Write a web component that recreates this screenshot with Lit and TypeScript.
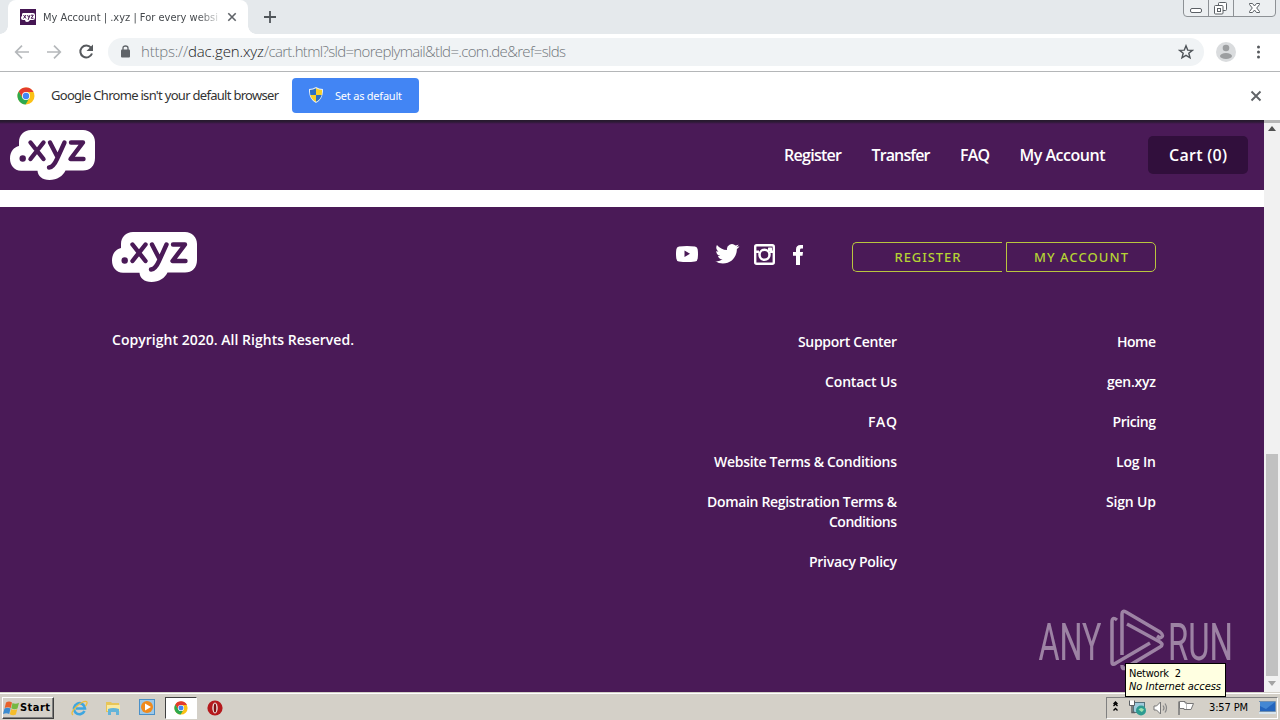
import { LitElement, html, css, svg } from "lit";
import { customElement, property } from "lit/decorators.js";

/** Inline text whose tracking is adjusted so that it spans a given width. */
@customElement("fit-text")
class FitText extends LitElement {
  @property({ type: Number }) width = 0;
  static styles = css`
    :host { display: inline-block; white-space: pre; }
  `;
  render() {
    return html`<slot></slot>`;
  }
  updated() {
    this.style.letterSpacing = "0px";
    const n = (this.textContent || "").length;
    const natural = this.getBoundingClientRect().width;
    const gap = (this.width - natural) / Math.max(1, n - 1);
    this.style.letterSpacing = `${gap}px`;
    this.style.marginRight = `${-gap}px`;
  }
}

const fit = (text: string, width: number) =>
  html`<fit-text .width=${width}>${text}</fit-text>`;

const logo = (cls: string) => html`
  <svg class=${cls} viewBox="0 0 85 50">
    <path fill="#fff" d="M21 0H73C80 0 85 5 85 12V28C85 36 80 40.500 73 40.500H55.500C53 46 47 50 39.500 50C32 50 28 46 27.500 40.800H11C4 40.800 0 35 0 28.500C0 21.500 4 17 9 16V12C9 5 14 0 21 0Z"/>
    <circle cx="12.700" cy="28.500" r="3.200" fill="#4a1a57"/>
    <g fill="none" stroke="#4a1a57" stroke-width="4.400" stroke-linecap="round" stroke-linejoin="round">
      <path d="M20.500 12.500L33.500 29M33.500 12.500L20.500 29"/>
      <path d="M40 12.500L47.500 27M54.500 12.500L47 29Q43.500 37 39 37.500"/>
      <path d="M61 12.500H73L60.500 29H73.500"/>
    </g>
  </svg>`;

const chrome = (cls: string) => html`
  <svg class=${cls} viewBox="0 0 18 18">
    <circle cx="9" cy="9" r="8.500" fill="#fbc116"/>
    <path fill="#e33b2e" d="M9 9V5H16.600A8.500 8.500 0 0 0 1.700 4.600L5.500 11Z"/>
    <path fill="#2da94f" d="M1.700 4.600A8.500 8.500 0 0 0 8.600 17.500L12.400 11H9L5.500 11Z"/>
    <circle cx="9" cy="9" r="4" fill="#fff"/>
    <circle cx="9" cy="9" r="3.200" fill="#4286f5"/>
  </svg>`;

const flag = svg`
  <path fill="#e8622c" d="M3 2.500Q6 .5 9 2.500L7.800 8Q5 6.500 1.700 8Z"/>
  <path fill="#75b843" d="M9.500 3Q12.500 4.500 16 2.700L14.500 8.400Q11.500 10 8.300 8.300Z"/>
  <path fill="#3c8bd0" d="M1.500 8.600Q4.500 7.100 7.600 8.600L6.200 14Q3.500 12.500 0 14Z"/>
  <path fill="#f5bd2b" d="M8.200 9Q11.500 10.700 14.300 9L12.900 14.500Q10 16 6.800 14.300Z"/>`;

@customElement("app-root")
class AppRoot extends LitElement {
  static styles = css`
    * { box-sizing: border-box; }
    :host {
      display: flex; flex-direction: column; position: relative;
      width: 1280px; height: 720px; overflow: hidden;
      font-family: "Noto Sans", "Open Sans", sans-serif;
    }
    svg { display: block; flex: none; }

    .tabs { height: 34px; flex: none; display: flex; background: #e5e9ec; }
    .tabwrap { width: 256px; display: flex; align-items: flex-end; flex: none; }
    .foot { width: 8px; height: 8px; }
    .foot.l { background: radial-gradient(circle at 0 0, #e5e9ec 7.500px, #fff 8px); }
    .foot.r { background: radial-gradient(circle at 100% 0, #e5e9ec 7.500px, #fff 8px); }
    .tab {
      width: 240px; height: 34px; background: #fff; border-radius: 8px 8px 0 0;
      display: flex; align-items: center; padding-left: 12px; color: #45494d; font-size: 11px;
    }
    .title {
      width: 176px; margin-left: 7px; white-space: nowrap; font-family: "DejaVu Sans Condensed", "DejaVu Sans", sans-serif;
      -webkit-mask-image: linear-gradient(to right, #000 155px, transparent 180px);
    }
    .tabx { margin-left: 8px; }
    .plus { margin: 11px 0 0 8px; }
    .grow { flex: 1; }
    .win { width: 94px; height: 17px; margin-right: 3px; }

    .toolbar { height: 37px; flex: none; background: #fff; display: flex; align-items: center; }
    .navi { margin: -1px 11px 0 12px; }
    .omni {
      width: 1096px; height: 28px; border-radius: 14px; background: #f0f3f5; margin-top: -2px;
      display: flex; align-items: center; padding: 0 10px 0 13px; color: #71767b;
      font-family: "Open Sans", sans-serif; font-weight: 300; font-size: 15px;
    }
    .url { margin: -2px 0 0 11px; line-height: 20px; white-space: nowrap; }
    .host { color: #202124; }
    .avatar { margin: -2px 0 0 12px; }
    .dots { margin: -1px 0 0 20px; }

    .info {
      height: 49px; flex: none; background: #fff; border-top: 1px solid #b4b6b8; padding: 0 18px 0 17px;
      display: flex; align-items: center; color: #333; font-size: 13px;
    }
    .msg { margin: -2px 0 0 16px; line-height: 18px; }
    .default {
      width: 127px; height: 35px; margin: -1px 0 0 13px; border-radius: 4px; background: #4285f4; color: #fff;
      display: flex; align-items: center; padding: 0 0 1px 17px; font-size: 11px; gap: 12px;
    }

    .view { height: 572px; flex: none; display: flex; position: relative; }
    .page { width: 1264px; display: flex; flex-direction: column; color: #fff; font-weight: 600; font-family: "Open Sans", sans-serif; }
    .head {
      height: 70px; flex: none; background: linear-gradient(#251a2c 0, #2d1a36 2px, #4a1a57 4px);
      display: flex; align-items: flex-start; padding-left: 10px; font-size: 16px; line-height: 22px;
    }
    .hlogo { width: 85px; height: 50px; margin-top: 10px; }
    .menu { display: flex; gap: 29.500px; margin: 24px 0 0 689px; width: 364px; }
    .cart {
      width: 100px; height: 38px; margin-top: 16px; border-radius: 5px; background: #310f3c;
      display: flex; justify-content: center; align-items: center;
    }
    .white { height: 17px; flex: none; background: #fff; }
    .footer { flex: 1; background: #4a1a57; padding: 25px 107px 0 112px; font-size: 14px; line-height: 20px; }
    .row { display: flex; align-items: flex-start; height: 98px; }
    .flogo { width: 85px; height: 50px; }
    .social { margin: 11px 0 0 478px; }
    .btns { display: flex; gap: 4px; margin: 10px 0 0 47px; color: #b5d334; font-family: "Noto Sans", sans-serif; font-weight: 500; font-size: 13px; }
    .btn { width: 150px; height: 30px; border: 1px solid #b9c63f; display: flex; justify-content: center; align-items: center; }
    .btn.a { border-right: 0; border-radius: 5px 0 0 5px; }
    .btn.b { border-radius: 0 5px 5px 0; }
    .cols { display: flex; }
    .copy { width: 485px; }
    .col { display: flex; flex-direction: column; align-items: flex-end; gap: 20px; padding-top: 2px; }
    .c1 { width: 300px; }
    .c2 { width: 259px; }
    .two { display: flex; flex-direction: column; align-items: flex-end; }

    .scroll { width: 16px; background: #f1f1f1; display: flex; flex-direction: column; align-items: center; border-top: 3px solid #b5b5b5; }
    .up { margin-top: 3px; }
    .thumb { width: 12px; height: 222px; margin-top: 323px; background: #c1c1c1; }
    .down { margin-top: 5px; }

    .mark { position: absolute; left: 1036px; top: 606px; }
    .mark text { font-family: "Roboto", sans-serif; font-weight: 400; }
    .tip {
      position: absolute; left: 1125px; top: 663px; width: 101px; height: 34px; background: #ffffe1;
      border: 1px solid #000; color: #000; padding: 3px 0 0 3px; font-size: 11px; line-height: 13px;
      font-family: "DejaVu Sans Condensed", "DejaVu Sans", sans-serif;
      display: flex; flex-direction: column; align-items: flex-start;
    }
    .it { font-style: italic; }

    .bar {
      height: 28px; flex: none; background: #d4d0c8; border-top: 1px solid #d4d0c8; box-shadow: inset 0 1px #fff;
      display: flex; align-items: center; padding: 2px 2px 0 2px; color: #000; font-size: 11px;
      font-family: "DejaVu Sans Condensed", "DejaVu Sans", sans-serif;
    }
    .start {
      width: 52px; height: 22px; border: 1px solid; border-color: #fff #404040 #404040 #fff;
      box-shadow: inset -1px -1px #808080; display: flex; align-items: center; gap: 1px; padding-left: 0; font-weight: 700;
    }
    .ie { margin-left: 17px; }
    .fold { margin-left: 17px; }
    .wmp { margin-left: 17px; }
    .task {
      width: 32px; height: 22px; margin-left: 10px; background: #fff; border: 1px solid; border-color: #404040 #fff #fff #404040;
      display: flex; align-items: center; justify-content: center;
    }
    .c16 { width: 14px; height: 14px; }
    .c18 { width: 18px; height: 18px; }
    .opera { margin-left: 10px; }
    .tray {
      width: 172px; height: 22px; border: 1px solid; border-color: #808080 #fff #fff #808080;
      display: flex; align-items: center; padding-left: 6px;
    }
    .clock { margin-left: 14px; }
    .desk { margin-left: 11px; }
  `;

  render() {
    return html`
      <div class="tabs">
        <div class="tabwrap">
          <div class="foot l"></div>
          <div class="tab">
            <svg width="16" height="16" viewBox="0 0 16 16">
              <rect width="16" height="16" fill="#451653"/>
              <path fill="#fff" d="M3 4H13Q15 4 15 6V9Q15 11 13 11H10Q9 13 7 13Q5 13 5 11H3Q1 11 1 9Q1 7.500 2 7V5.500Q2 4 3 4Z"/>
              <path fill="none" stroke="#451653" stroke-width="1" d="M3.500 6L6 9.500M6 6L3.500 9.500M7.500 6L8.700 8.500M10 6L8 11M11 6.200H13.300L11.200 9.300H13.500"/>
            </svg>
            <div class="title">${fit("My Account | .xyz | For every websi", 175)}</div>
            <svg class="tabx" width="10" height="10" viewBox="0 0 10 10"><path d="M1.300 1.300L8.700 8.700M8.700 1.300L1.300 8.700" stroke="#5f6368" stroke-width="1.600"/></svg>
          </div>
          <div class="foot r"></div>
        </div>
        <svg class="plus" width="13" height="13" viewBox="0 0 13 13"><path d="M6 0V12M0 6H12" stroke="#50555a" stroke-width="1.800"/></svg>
        <div class="grow"></div>
        <svg class="win" viewBox="0 0 94 17">
          <path d="M.5 0V13Q.5 16.500 4 16.500H89Q92.500 16.500 92.500 13V0M25.500 0V16M50.500 0V16" fill="#eceff1" stroke="#8d9195"/>
          <g fill="#fff" stroke="#5b6065">
            <rect x="7.500" y="8.500" width="11" height="4" rx="1.500"/>
            <rect x="35.500" y="2.500" width="8" height="8" rx="1"/>
            <rect x="31.500" y="5.500" width="8.500" height="8.500" rx="1"/>
            <rect x="34.500" y="8.500" width="3" height="3"/>
            <path d="M66.500 3.500H69.500L71.500 6L73.500 3.500H76.500V4.500L73.700 8L76.500 11.500V12.500H73.500L71.500 10L69.500 12.500H66.500V11.500L69.300 8L66.500 4.500Z"/>
          </g>
        </svg>
      </div>

      <div class="toolbar">
        <svg class="navi" width="85" height="18" viewBox="0 0 85 18">
          <g fill="none" stroke="#b5b8bb" stroke-width="1.700"><path d="M17 9H4M10 2.700L3.700 9L10 15.300M35 9H48M42 2.700L48.300 9L42 15.300"/></g>
          <path d="M79 4.700A6 6 0 1 0 80 10.500" fill="none" stroke="#56595d" stroke-width="2"/>
          <path d="M81 1.500V8H74.500Z" fill="#56595d"/>
        </svg>
        <div class="omni">
          <svg width="9" height="13" viewBox="0 0 9 13"><rect y="4.500" width="9" height="8" rx="1" fill="#5f6368"/><path d="M2 5V3Q2 1 4.500 1Q7 1 7 3V5" fill="none" stroke="#5f6368" stroke-width="1.300"/></svg>
          <div class="url">${fit("https://", 47)}<span class="host">${fit("dac.gen.xyz", 76)}</span>${fit("/cart.html?sld=noreplymail&tld=.com.de&ref=slds", 302)}</div>
          <div class="grow"></div>
          <svg width="16" height="16" viewBox="0 0 16 16"><path d="M8 1.800L9.700 6.100L14.300 6.400L10.800 9.300L12 13.800L8 11.300L4 13.800L5.200 9.300L1.700 6.400L6.300 6.100Z" fill="none" stroke="#4f5459" stroke-width="1.400"/></svg>
        </div>
        <svg class="avatar" width="20" height="20" viewBox="0 0 20 20"><circle cx="10" cy="10" r="10" fill="#dadcde"/><circle cx="10" cy="6" r="3.300" fill="#9c9ea0"/><ellipse cx="10" cy="14" rx="6" ry="3" fill="#9c9ea0"/></svg>
        <svg class="dots" width="5" height="14" viewBox="0 0 5 14"><g fill="#56595d"><circle cx="2.500" cy="2" r="1.500"/><circle cx="2.500" cy="7" r="1.500"/><circle cx="2.500" cy="12" r="1.500"/></g></svg>
      </div>

      <div class="info">
        ${chrome("c18")}
        <div class="msg">${fit("Google Chrome isn't your default browser", 228)}</div>
        <div class="default">
          <svg width="14" height="16" viewBox="0 0 14 16">
            <path fill="#e6edf2" d="M7 0Q10 2 14 2Q14.500 12 7 16Q-.5 12 0 2Q4 2 7 0Z"/>
            <path fill="#2b6fc2" d="M7 1.300V8H1.300Q.9 5 1 3Q4 3 7 1.300ZM7 8H12.700Q11.500 12.500 7 14.800Z"/>
            <path fill="#f7cf27" d="M7 1.300V8H12.700Q13.100 5 13 3Q10 3 7 1.300ZM7 8H1.300Q2.500 12.500 7 14.800Z"/>
          </svg>
          ${fit("Set as default", 67)}
        </div>
        <div class="grow"></div>
        <svg width="12" height="12" viewBox="0 0 12 12"><path d="M1.500 1.500L10.500 10.500M10.500 1.500L1.500 10.500" stroke="#606367" stroke-width="1.900"/></svg>
      </div>

      <div class="view">
        <div class="page">
          <div class="head">
            ${logo("hlogo")}
            <div class="menu">
              ${fit("Register", 58)}${fit("Transfer", 59)}${fit("FAQ", 30)}${fit("My Account", 86)}
            </div>
            <div class="cart">${fit("Cart (0)", 58)}</div>
          </div>
          <div class="white"></div>
          <div class="footer">
            <div class="row">
              ${logo("flogo")}
              <svg class="social" width="130" height="23" viewBox="0 0 130 23">
                <path fill="#fff" fill-rule="evenodd" d="M4 3.500Q12 2.500 20 3.500Q22.500 4 22.700 6.500Q23.300 11 22.700 15.500Q22.500 18 20 18.500Q12 19.500 4 18.500Q1.500 18 1.300 15.500Q.7 11 1.300 6.500Q1.500 4 4 3.500ZM9.500 7.500V14L15 10.800Z"/>
                <path transform="translate(40.300 -1.200)" fill="#fff" d="M23.950 4.570a10 10 0 0 1-2.820.770 4.960 4.960 0 0 0 2.160-2.720c-.950.550-2.010.960-3.130 1.180a4.920 4.920 0 0 0-8.380 4.480C7.690 8.090 4.070 6.130 1.640 3.160a4.820 4.820 0 0 0-.670 2.470c0 1.710.870 3.210 2.190 4.100a4.900 4.900 0 0 1-2.230-.620v.060a4.920 4.920 0 0 0 3.950 4.830 5 5 0 0 1-2.210.080 4.940 4.940 0 0 0 4.600 3.420A9.870 9.870 0 0 1 0 19.540a13.990 13.990 0 0 0 7.560 2.210c9.050 0 14-7.500 14-13.980 0-.210 0-.420-.020-.630a9.940 9.940 0 0 0 2.460-2.550z"/>
                <rect x="80.200" y="2.200" width="18.600" height="18.600" rx="1.500" fill="none" stroke="#fff" stroke-width="2.400"/>
                <path fill="#fff" d="M80 7.500H84V10H80ZM95 7.500H99V10H95Z"/>
                <rect x="93" y="4.500" width="4" height="4" rx=".6" fill="#fff"/>
                <circle cx="89.500" cy="11.800" r="5" fill="none" stroke="#fff" stroke-width="2.500"/>
                <path fill="#fff" d="M121 22V12.800H118V9H121V6.500Q121 2 125.500 2H128V5.600H126.500Q125 5.600 125 7V9H128L127.500 12.800H125V22Z"/>
              </svg>
              <div class="btns">
                <div class="btn a">${fit("REGISTER", 66)}</div>
                <div class="btn b">${fit("MY ACCOUNT", 94)}</div>
              </div>
            </div>
            <div class="cols">
              <div class="copy">${fit("Copyright 2020. All Rights Reserved.", 242)}</div>
              <div class="col c1">
                ${fit("Support Center", 99)}
                ${fit("Contact Us", 72)}
                ${fit("FAQ", 29)}
                ${fit("Website Terms & Conditions", 183)}
                <div class="two">${fit("Domain Registration Terms &", 190)}${fit("Conditions", 68)}</div>
                ${fit("Privacy Policy", 88)}
              </div>
              <div class="col c2">
                ${fit("Home", 39)}
                ${fit("gen.xyz", 49)}
                ${fit("Pricing", 43.5)}
                ${fit("Log In", 40)}
                ${fit("Sign Up", 50)}
              </div>
            </div>
          </div>
        </div>
        <div class="scroll">
          <svg class="up" width="8" height="5" viewBox="0 0 8 5"><path d="M4 0L8 5H0Z" fill="#505050"/></svg>
          <div class="thumb"></div>
          <svg class="down" width="8" height="5" viewBox="0 0 8 5"><path d="M0 0H8L4 5Z" fill="#a3a3a3"/></svg>
        </div>
      </div>

      <div class="bar">
        <div class="start">
          <svg width="16" height="16" viewBox="0 0 16 16">${flag}</svg>
          ${fit("Start", 30)}
        </div>
        <svg class="ie" width="17" height="16" viewBox="0 0 17 16">
          <path d="M13.500 11A5.500 5.500 0 1 1 14 8.500H5" fill="none" stroke="#3ea6e0" stroke-width="2.600"/>
          <path d="M2 15Q-1 13 5 7Q12 .5 15.500 1.500Q17 2.500 14.500 6" fill="none" stroke="#edbd3c" stroke-width="1.300"/>
        </svg>
        <svg class="fold" width="16" height="16" viewBox="0 0 16 16">
          <path fill="#e7c558" d="M1 2H6L7 3H14V12H1Z"/><path fill="#fae99f" d="M2 5H15V11H2Z"/><path fill="#63b4d9" d="M3 9Q8 7 14 9V15H11V12H6V15H3Z"/>
        </svg>
        <svg class="wmp" width="17" height="17" viewBox="0 0 17 17">
          <rect x="1.500" y=".5" width="15" height="15" fill="#9dc8e8" stroke="#4a90c8"/><circle cx="9" cy="8" r="6" fill="#f08a1c"/><path d="M7 4.500L13 8L7 11.500Z" fill="#fff"/>
        </svg>
        <div class="task">${chrome("c16")}</div>
        <svg class="opera" width="16" height="16" viewBox="0 0 16 16"><circle cx="8" cy="8" r="7.600" fill="#b5191d"/><ellipse cx="8" cy="8" rx="2.700" ry="5.400" fill="#f0e6e2"/><ellipse cx="8" cy="8" rx="1.300" ry="4.600" fill="#7e0f12"/></svg>
        <div class="grow"></div>
        <div class="tray">
          <svg width="74" height="18" viewBox="0 0 74 18">
            <path d="M.5 7L2.500 5L4.500 7M.5 11.500L2.500 9.500L4.500 11.500M.5 5L2.500 3L4.500 5M.5 9.500" fill="none" stroke="#000" stroke-width="1.300"/>
            <rect x="20.500" y="3.500" width="11" height="10" fill="#9fcbdc" stroke="#54727d"/>
            <path d="M16.500 1.500V6.500H21.500V1.500" fill="#fff" stroke="#5c6064"/>
            <path d="M19 6.500V13.500H22" fill="none" stroke="#5c6064" stroke-width="1.500"/>
            <circle cx="28" cy="11.500" r="5" fill="#2d9c91"/><path d="M25.500 10.500Q28 7.500 31 10.500Q29 14 28 12.500Z" fill="#9bdfb0"/>
            <path d="M41 7H43.500L47.500 3V15L43.500 11H41Z" fill="#fff" stroke="#777"/>
            <path d="M50 6.500Q52 9 50 11.500M52 4.500Q55 9 52 13.500" fill="none" stroke="#888" stroke-width="1.200"/>
            <path d="M66 16V2.500" fill="none" stroke="#777" stroke-width="1.500"/>
            <path d="M66.500 2.500H72V4H74V10.500H71V9.500H66.500Z" fill="#fff" stroke="#777"/>
          </svg>
          <svg width="8" height="18" viewBox="0 0 8 18"><path d="M0 4.500H6.500L4 10.500H0" fill="#fff" stroke="#777"/></svg>
          <div class="clock">${fit("3:57 PM", 39)}</div>
          <svg class="desk" width="17" height="14" viewBox="0 0 17 14"><path d="M1 1H16V10H1Z" fill="#2465bd"/><path d="M1 1H16L7 8L1 5Z" fill="#4387d3"/><path d="M0 11H17V13H0Z" fill="#d7e4ed"/><path d="M0 .5H16.500V10.500H.5" fill="none" stroke="#7190b0"/></svg>
        </div>
      </div>

      <svg class="mark" width="200" height="66" viewBox="0 0 200 66">
        <g fill="#fff" opacity=".46">
          <text x="2.500" y="53.500" font-size="52" textLength="63" lengthAdjust="spacingAndGlyphs">ANY</text>
          <text x="132" y="53.500" font-size="52" textLength="65" lengthAdjust="spacingAndGlyphs">RUN</text>
        </g>
        <path opacity=".46" fill="none" stroke="#fff" stroke-width="3.500" stroke-linejoin="round"
          d="M81 14Q76 10 76 16V56Q76 60 80 57L114 37M86 49V8Q86 4 90 6L124 26Q129 30 124 32L121 30M91 18L124 36Q128 39 124 41L89 62Q86 64 86 59"/>
      </svg>
      <div class="tip">
        ${fit("Network  2", 52)}
        <span class="it">${fit("No Internet access", 92)}</span>
      </div>
    `;
  }
}
